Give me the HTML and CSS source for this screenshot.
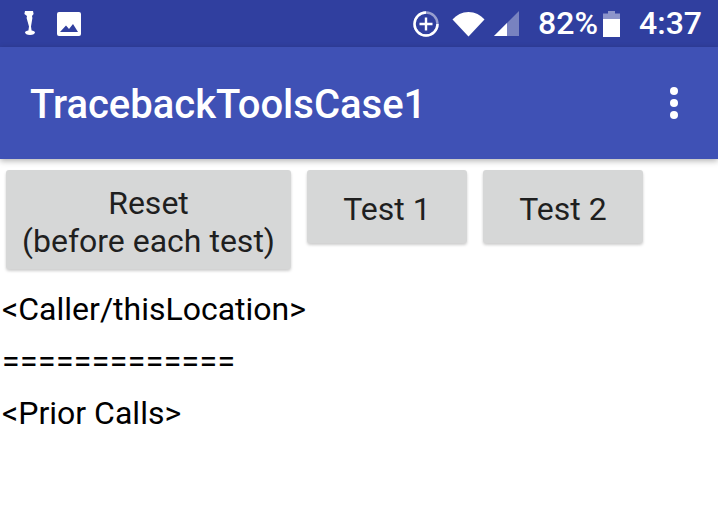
FILE: index.html
```html
<!DOCTYPE html>
<html lang="en">
<head>
<meta charset="utf-8">
<title>TracebackToolsCase1</title>
<link rel="stylesheet" href="styles.css">
</head>
<body>
<div class="status">
  <div class="status-left">
    <svg class="ic-alert" width="16" height="28" viewBox="0 0 16 28"><path d="M4 1h8l.6 3-1.600 2 .4 2-1.400 8.500.6 4c1.800.3 3.400 1 3.400 2s-2 2.500-5 2.500-5-1.400-5-2.500 1.600-1.700 3.400-2l.6-4L5.600 8 6 6 3.400 4z" fill="#fff"/></svg>
    <svg class="ic-image" width="24" height="24" viewBox="0 0 24 24"><path fill-rule="evenodd" d="M2 0h20a2 2 0 0 1 2 2v20a2 2 0 0 1-2 2H2a2 2 0 0 1-2-2V2a2 2 0 0 1 2-2zM3 20h18l-5-8-4 5-3-3.500z" fill="#fff"/></svg>
  </div>
  <div class="status-right">
    <svg class="ic-saver" width="28" height="28" viewBox="0 0 28 28"><circle cx="14" cy="14" r="11.500" fill="none" stroke="#fff" stroke-opacity=".5" stroke-width="2.400"/><path d="M25.500 14A11.500 11.500 0 1 1 14 2.500" fill="none" stroke="#fff" stroke-width="2.400"/><path d="M14 7.500v13M7.500 14h13" stroke="#fff" stroke-width="2.400"/></svg>
    <svg class="ic-wifi" width="33" height="26" viewBox="0 0 33 26"><path d="M16.500 25.500 0.500 8.500C4.500 4 10 1 16.500 1s12 3 16 7.500z" fill="#fff"/></svg>
    <svg class="ic-signal" width="25" height="25" viewBox="0 0 25 25"><path d="M0 25 25 0v25z" fill="#fff" fill-opacity=".35"/><path d="M0 25 13 12v13z" fill="#fff"/></svg>
    <span class="pct">82%</span>
    <svg class="ic-batt" width="17" height="26" viewBox="0 0 17 26"><path d="M5 0h7v2.500h5V8H0V2.500h5z" fill="#fff" fill-opacity=".45"/><path d="M0 8h17v18H0z" fill="#fff"/></svg>
    <span class="clock">4:37</span>
  </div>
</div>
<header class="toolbar">
  <h1 class="title">TracebackToolsCase1</h1>
  <div class="overflow"><i></i><i></i><i></i></div>
</header>
<main class="content">
  <div class="buttons">
    <button class="btn btn-wide">Reset<br>(before each test)</button>
    <button class="btn">Test 1</button>
    <button class="btn">Test 2</button>
  </div>
  <p class="line first">&lt;Caller/thisLocation&gt;</p>
  <p class="line rule">=============</p>
  <p class="line">&lt;Prior Calls&gt;</p>
</main>
</body>
</html>
```
FILE: styles.css
```css
* { box-sizing: border-box; }
html, body { margin: 0; padding: 0; }
body {
  width: 718px;
  height: 525px;
  overflow: hidden;
  background: #fff;
  font-family: Roboto, "Liberation Sans", sans-serif;
}
.status {
  height: 47px;
  background: #303f9f;
  display: flex;
  align-items: center;
  justify-content: space-between;
  padding: 0 16px 0 21px;
  color: #fff;
}
.status-left, .status-right { display: flex; align-items: center; }
.ic-image { margin-left: 20px; margin-right: -1px; }
.ic-wifi { margin-left: 12px; }
.ic-signal { margin-left: 9px; }
.pct, .clock { font-size: 32px; font-weight: 500; line-height: 47px; }
.pct { margin-left: 19px; }
.ic-batt { margin-left: 5px; }
.clock { margin-left: 19px; }
.toolbar {
  height: 112px;
  background: #3f51b5;
  display: flex;
  align-items: center;
  justify-content: space-between;
  padding: 0 40px 0 30px;
  box-shadow: 0 2px 6px rgba(0, 0, 0, .3);
  position: relative;
}
.title { margin: 3px 0 0; color: #fff; font-size: 40px; font-weight: 500; }
.overflow { display: flex; flex-direction: column; gap: 4px; }
.overflow i { display: block; width: 8px; height: 8px; border-radius: 50%; background: #fff; }
.content { padding: 11px 0 0; }
.buttons { display: flex; align-items: flex-start; gap: 16px; padding-left: 6px; }
.btn {
  width: 160px;
  height: 73px;
  border: 0;
  padding: 4px 0 0;
  background: #d6d7d7;
  border-radius: 3px;
  box-shadow: 0 2px 3px rgba(0, 0, 0, .2);
  color: #1f1f1f;
  font: 400 32px/38px Roboto, "Liberation Sans", sans-serif;
}
.btn-wide { width: 285px; height: 99px; }
.line {
  margin: 0;
  padding-left: 2px;
  color: #000;
  font-size: 32px;
  line-height: 52px;
}
.first { margin-top: 14px; }
.rule { letter-spacing: .4px; }
```
